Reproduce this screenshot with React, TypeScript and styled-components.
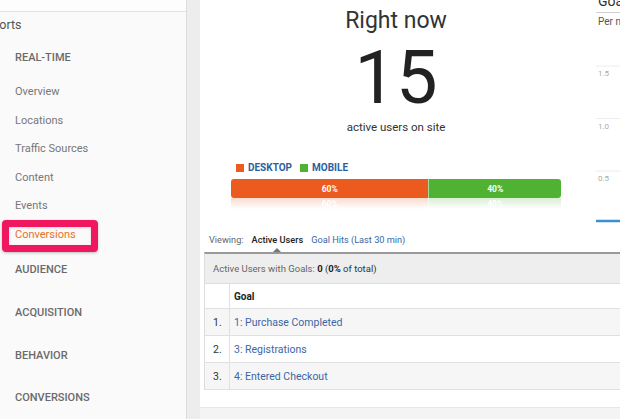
import React from 'react'
import styled, {createGlobalStyle} from 'styled-components'

const colors = {
    navText: '#777777',
    navHead: '#6a6a6a',
    active: '#e8702a',
    highlight: '#ee1760',
    link: '#3a66a6',
    desktop: '#eb5a1e',
    mobile: '#4fb233',
}

const GlobalStyle = createGlobalStyle`
  html, body {
    margin: 0;
    padding: 0;
  }
  body {
    font-family: Roboto, 'Noto Sans', Arial, sans-serif;
    background: #fff;
    overflow: hidden;
  }
`

const Page = styled.div`
  display: flex;
  width: 620px;
  height: 419px;
  overflow: hidden;
`

const Sidebar = styled.div`
  position: relative;
  flex: 0 0 186px;
  background: #fafafa;
  border-right: 1px solid #dcdcdc;
`

const TopStrip = styled.div`
  height: 11px;
  background: #fdfdfd;
  border-bottom: 1px solid #e2e2e2;
`

const ReportsTitle = styled.div`
  height: 26px;
  line-height: 26px;
  margin-left: -22px;
  font-size: 12.5px;
  color: #555;
`

const SectionHead = styled.div<{ $h: number }>`
  height: ${({$h}) => $h}px;
  line-height: ${({$h}) => $h}px;
  padding-left: 15px;
  font-size: 11px;
  font-weight: 500;
  text-transform: uppercase;
  color: ${colors.navHead};
`

const NavItem = styled.div<{ $active?: boolean }>`
  height: 28.5px;
  line-height: 28.5px;
  padding-left: 15px;
  font-size: 11px;
  color: ${({$active}) => $active ? colors.active : colors.navText};
`

const Highlight = styled.div`
  position: absolute;
  left: 2px;
  top: 220px;
  width: 82px;
  height: 18px;
  border: 7px solid ${colors.highlight};
  border-radius: 4px;
  box-shadow: 0 1px 3px rgba(0, 0, 0, 0.25), inset 0 1px 3px rgba(0, 0, 0, 0.15);
`

const Main = styled.div`
  flex: 1;
  min-width: 0;
  display: flex;
  background: #ededed;
  padding-left: 13px;
`

const Card = styled.div`
  flex: 0 0 440px;
  display: flex;
  flex-direction: column;
  background: #fff;
`

const TopSection = styled.div`
  display: flex;
  height: 230px;
`

const NowPanel = styled.div`
  flex: 0 0 392px;
  display: flex;
  flex-direction: column;
  align-items: center;
`

const NowTitle = styled.div`
  margin-top: 7px;
  font-size: 23px;
  line-height: 27px;
  color: #333;
`

const BigNumber = styled.div`
  margin-top: 7px;
  font-size: 74px;
  line-height: 74px;
  color: #222;
`

const NowCaption = styled.div`
  margin-top: 5px;
  font-size: 11.5px;
  line-height: 14px;
  color: #333;
`

const Legend = styled.div`
  margin-top: 28px;
  width: 330px;
  padding-left: 5px;
  box-sizing: border-box;
  display: flex;
  gap: 8px;
  font-size: 10px;
  line-height: 12px;
  font-weight: 700;
  color: #2d5f9e;
`

const LegendItem = styled.div<{ $color: string }>`
  display: flex;
  align-items: center;
  gap: 4px;

  &::before {
    content: '';
    width: 8px;
    height: 8px;
    background: ${({$color}) => $color};
  }
`

const Bar = styled.div`
  margin-top: 5px;
  display: flex;
  width: 330px;
  height: 19px;
  border-radius: 3px;
  overflow: hidden;
`

const Reflection = styled(Bar)`
  margin-top: 0;
  height: 11px;
  border-radius: 0;
  -webkit-mask-image: linear-gradient(to bottom, rgba(0, 0, 0, 0.22), transparent);
  mask-image: linear-gradient(to bottom, rgba(0, 0, 0, 0.22), transparent);
`

const Segment = styled.div<{ $color: string }>`
  display: flex;
  align-items: center;
  justify-content: center;
  background: ${({$color}) => $color};
  color: #fff;
  font-size: 8.5px;
  font-weight: 700;

  & + & {
    border-left: 1px solid rgba(255, 255, 255, 0.5);
  }
`

const GoalPanel = styled.div`
  margin-left: 4px;
  flex: 1;
  min-width: 0;
`

const GoalHead = styled.div`
  height: 12px;
  overflow: hidden;
  border-bottom: 1px solid #cfcfcf;
  font-size: 14px;
  color: #333;
  padding-left: 2px;
`

const GoalHeadText = styled.div`
  line-height: 14px;
  margin-top: -6px;
`

const PerMinute = styled.div`
  padding-left: 2px;
  font-size: 10px;
  line-height: 18px;
  color: #555;
`

const Viewing = styled.div`
  display: flex;
  gap: 8px;
  padding-left: 9px;
  font-size: 9.2px;
  line-height: 14px;
  margin-top: 3px;
  color: #666;
`

const Tab = styled.span<{ $active?: boolean }>`
  position: relative;
  color: ${({$active}) => $active ? '#222' : colors.link};
  font-weight: ${({$active}) => $active ? 500 : 400};

  ${({$active}) => $active && `
    &::after {
      content: '';
      position: absolute;
      left: 50%;
      bottom: -5px;
      margin-left: -4px;
      border: 4px solid transparent;
      border-bottom-color: #777;
      border-top: 0;
    }
  `}
`

const Table = styled.div`
  margin: 5px 0 0 4px;
  width: 440px;
  border-top: 2px solid #999;
  border-left: 1px solid #ddd;
`

const Summary = styled.div`
  height: 29px;
  line-height: 29px;
  padding-left: 8px;
  background: #eee;
  border-bottom: 1px solid #ddd;
  font-size: 9.5px;
  color: #666;

  b {
    color: #222;
  }

  span {
    color: #333;
  }
`

const Row = styled.div<{ $shade?: boolean; $head?: boolean }>`
  display: grid;
  grid-template-columns: 25px 1fr;
  height: ${({$head}) => $head ? 24 : 26}px;
  border-bottom: 1px solid #e0e0e0;
  background: ${({$shade}) => $shade ? '#f6f6f6' : '#fff'};
`

const NumCell = styled.div`
  border-right: 1px solid #e0e0e0;
  padding-left: 8px;
  display: flex;
  align-items: center;
  font-size: 10.5px;
  color: #333;
`

const GoalCell = styled.div<{ $head?: boolean }>`
  padding-left: 4px;
  padding-top: ${({$head}) => $head ? '1px' : '0'};
  display: flex;
  align-items: center;
  font-size: ${({$head}) => $head ? '10px' : '10.5px'};
  font-weight: ${({$head}) => $head ? 700 : 400};
  color: ${({$head}) => $head ? '#222' : colors.link};
`

const Footer = styled.div`
  margin-top: auto;
  height: 11px;
  background: #f4f4f4;
  border-top: 1px solid #e6e6e6;
`

const navItems = ['Overview', 'Locations', 'Traffic Sources', 'Content', 'Events', 'Conversions']
const sections = ['Audience', 'Acquisition', 'Behavior', 'Conversions']
const devices = [
    {label: 'DESKTOP', share: 60, color: colors.desktop},
    {label: 'MOBILE', share: 40, color: colors.mobile},
]
const goals = ['1: Purchase Completed', '3: Registrations', '4: Entered Checkout']

function GoalChart() {
    const lines = [{y: 35, label: '1.5'}, {y: 87.5, label: '1.0'}, {y: 140, label: '0.5'}]
    return (
        <svg width="200" height="200" style={{display: 'block'}}>
            {lines.map(l => (
                <g key={l.label}>
                    <line x1="0" x2="200" y1={l.y} y2={l.y} stroke="#ececec" strokeWidth="1"/>
                    <text x="2" y={l.y + 10} fontSize="8" fill="#aaa" fontFamily="Roboto, Arial, sans-serif">{l.label}</text>
                </g>
            ))}
            <line x1="0" x2="200" y1="190" y2="190" stroke="#3a8fcf" strokeWidth="2.5"/>
        </svg>
    )
}

function App() {
    return (
        <Page>
            <GlobalStyle/>
            <Sidebar>
                <TopStrip/>
                <ReportsTitle>Reports</ReportsTitle>
                <SectionHead $h={40}>Real-Time</SectionHead>
                {navItems.map(item => (
                    <NavItem key={item} $active={item === 'Conversions'}>{item}</NavItem>
                ))}
                {sections.map(s => (
                    <SectionHead key={s} $h={42.8}>{s}</SectionHead>
                ))}
                <Highlight/>
            </Sidebar>
            <Main>
                <Card>
                    <TopSection>
                        <NowPanel>
                            <NowTitle>Right now</NowTitle>
                            <BigNumber>15</BigNumber>
                            <NowCaption>active users on site</NowCaption>
                            <Legend>
                                {devices.map(d => (
                                    <LegendItem key={d.label} $color={d.color}>{d.label}</LegendItem>
                                ))}
                            </Legend>
                            <Bar>
                                {devices.map(d => (
                                    <Segment key={d.label} $color={d.color} style={{flex: d.share}}>{d.share}%</Segment>
                                ))}
                            </Bar>
                            <Reflection>
                                {devices.map(d => (
                                    <Segment key={d.label} $color={d.color} style={{flex: d.share}}>{d.share}%</Segment>
                                ))}
                            </Reflection>
                        </NowPanel>
                        <GoalPanel>
                            <GoalHead><GoalHeadText>Goal Hits</GoalHeadText></GoalHead>
                            <PerMinute>Per minute</PerMinute>
                            <GoalChart/>
                        </GoalPanel>
                    </TopSection>
                    <Viewing>
                        <span>Viewing:</span>
                        <Tab $active>Active Users</Tab>
                        <Tab>Goal Hits (Last 30 min)</Tab>
                    </Viewing>
                    <Table>
                        <Summary>
                            Active Users with Goals: <b>0</b> <span>(<b>0%</b> of total)</span>
                        </Summary>
                        <Row $head>
                            <NumCell/>
                            <GoalCell $head>Goal</GoalCell>
                        </Row>
                        {goals.map((g, i) => (
                            <Row key={g} $shade={i % 2 === 0}>
                                <NumCell>{i + 1}.</NumCell>
                                <GoalCell>{g}</GoalCell>
                            </Row>
                        ))}
                    </Table>
                    <Footer/>
                </Card>
            </Main>
        </Page>
    );
}

export default App;
